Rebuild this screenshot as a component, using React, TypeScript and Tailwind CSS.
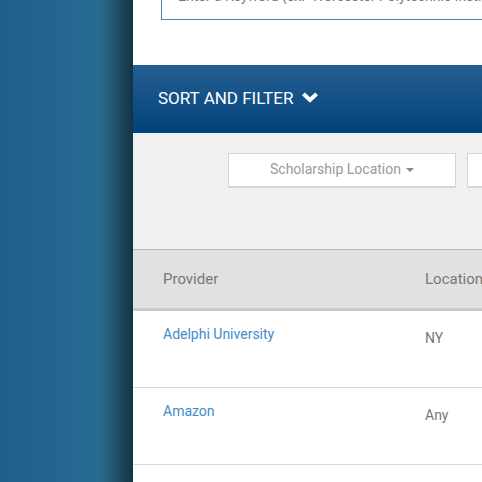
const rows = [
  { provider: "Adelphi University", location: "NY" },
  { provider: "Amazon", location: "Any" },
];

function FilterSelect({ label }: { label: string }) {
  return (
    <div className="relative w-[228px] shrink-0">
      <select
        aria-label={label}
        className="block h-[35px] w-full appearance-none border border-b-2 border-[#d6d6d6] bg-white pb-0.5 pl-[41px] font-[Roboto,sans-serif] text-sm text-[#999]"
      >
        <option>{label}</option>
      </select>
      <span className="pointer-events-none absolute top-[15px] right-[42px] border-x-4 border-t-4 border-x-transparent border-t-[#888]" />
    </div>
  );
}

function ChevronDown() {
  return (
    <svg aria-hidden="true" className="h-4 w-4" viewBox="0 0 16 16" fill="#fff">
      <path d="M0 5.2 2.8 2.4 8 7.2 13.2 2.4 16 5.2 8 12.8Z" />
    </svg>
  );
}

export default function App() {
  return (
    <div className="flex h-screen overflow-hidden bg-white font-[Roboto,sans-serif] text-sm text-[#777]">
      <div className="w-[133px] shrink-0 bg-[linear-gradient(to_right,#1f5f8d_0px,#24658f_50px,#276a93_90px,#286b8d_99px,#235a76_112px,#193f53_126px,#123345_133px)]" />
      <main className="min-w-0 flex-1 overflow-hidden">
        <section className="flex h-[65px] flex-col justify-end pb-[45px] pl-7">
          <input
            type="text"
            aria-label="Keyword"
            placeholder="Enter a Keyword (ex.  Worcester Polytechnic Institute)"
            className="h-12 w-[480px] shrink-0 border border-[#4c80ae] bg-white px-4 font-[Roboto,sans-serif] text-sm placeholder:text-[#777]"
          />
        </section>
        <button
          type="button"
          className="flex h-[68px] w-full items-center gap-[9px] bg-linear-to-b from-[#245f91] to-[#00427b] pb-0.5 pl-[25px] text-[17px] text-white"
        >
          SORT AND FILTER
          <ChevronDown />
        </button>
        <section className="flex h-[116px] gap-[11px] bg-[#f0f0f0] pt-5 pl-[95px]">
          <FilterSelect label="Scholarship Location" />
          <FilterSelect label="Scholarship Type" />
        </section>
        <table className="w-full min-w-[480px] table-fixed border-separate border-spacing-0 text-left">
          <thead>
            <tr className="h-[62px] bg-[#e1e1e1] text-[15px]">
              <th className="w-[262px] border-t border-b-3 border-t-[#b8b8b8] border-b-[#cacaca] pt-0.5 pl-[30px] font-normal">
                Provider
              </th>
              <th className="border-t border-b-3 border-t-[#b8b8b8] border-b-[#cacaca] pt-0.5 pl-[30px] font-normal">
                Location
              </th>
            </tr>
          </thead>
          <tbody>
            {rows.map((row) => (
              <tr key={row.provider} className="h-[77px] align-top">
                <td className="border-b border-[#dadada] pt-[13px] pl-[30px]">
                  <a href="#" className="text-[#428bca]">
                    {row.provider}
                  </a>
                </td>
                <td className="border-b border-[#dadada] pt-[17px] pl-[30px]">{row.location}</td>
              </tr>
            ))}
          </tbody>
        </table>
      </main>
    </div>
  );
}
